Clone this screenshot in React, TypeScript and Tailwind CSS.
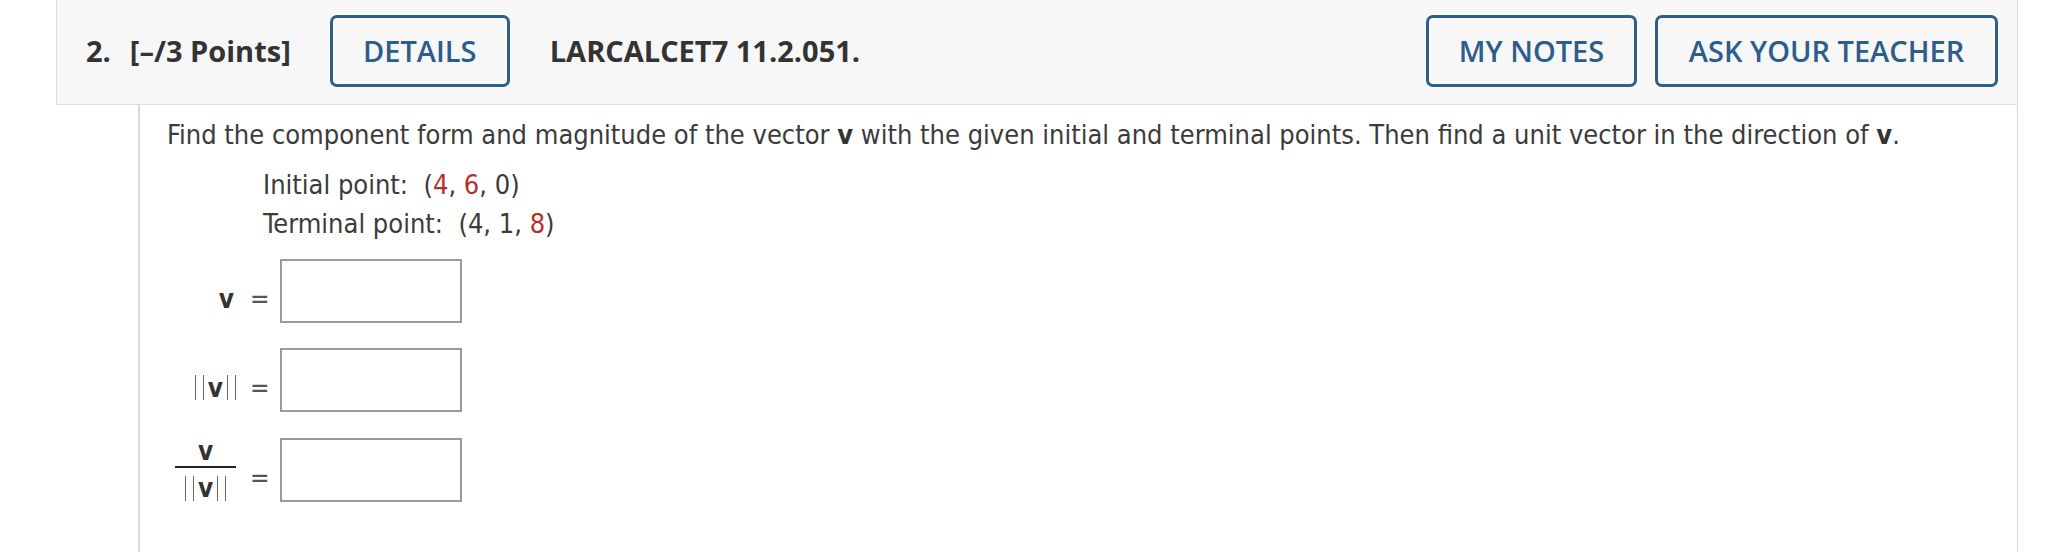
import React from "react";

const bodyFont = { fontFamily: '"DejaVu Sans Condensed", "DejaVu Sans", sans-serif' };

function Bars({ children }: { children: React.ReactNode }) {
  return (
    <span className="inline-flex items-center">
      <span className="inline-block h-[25px] w-[9px] border-x-[1.5px] border-[#666]" />
      <span className="mx-[4px] font-bold text-[#333]">{children}</span>
      <span className="inline-block h-[25px] w-[9px] border-x-[1.5px] border-[#666]" />
    </span>
  );
}

function Box() {
  return <div className="ml-[15px] h-[64px] w-[182px] border-2 border-[#9a9a9a] bg-white" />;
}

function Eq() {
  return <span className="ml-[14px] mt-[16px] w-[15px] text-center text-[26px] leading-[26px] text-[#555]">=</span>;
}

export default function App() {
  return (
    <div className="h-[552px] w-[2048px] overflow-hidden bg-white" style={{ fontFamily: '"Open Sans", sans-serif' }}>
      <div className="ml-[56px] w-[1962px]">
        <div className="flex h-[105px] items-start border-x border-b border-[#dedede] bg-[#f7f7f7] pl-[29px] pr-[19px] pt-[15px]">
          <div className="flex h-[72px] items-center text-[29px] font-bold text-[#333]">
            <span>2.</span>
            <span className="ml-[19px]">[–/3 Points]</span>
          </div>
          <button className="ml-[39px] h-[72px] w-[180px] rounded-[7px] border-[3px] border-[#2f5e88] bg-[#f7f7f7] text-[29px] font-semibold text-[#2d5d8a]">
            DETAILS
          </button>
          <div className="ml-[40px] flex h-[72px] items-center text-[29px] font-bold text-[#333]">LARCALCET7 11.2.051.</div>
          <button className="ml-auto h-[72px] w-[211px] rounded-[7px] border-[3px] border-[#2f5e88] bg-[#f7f7f7] text-[29px] font-semibold text-[#2d5d8a]">
            MY NOTES
          </button>
          <button className="ml-[18px] h-[72px] w-[343px] rounded-[7px] border-[3px] border-[#2f5e88] bg-[#f7f7f7] text-[29px] font-semibold text-[#2d5d8a]">
            ASK YOUR TEACHER
          </button>
        </div>
        <div className="ml-[82px] h-[447px] border-l-2 border-r border-[#dadada] bg-white text-[27px] text-[#3b3b3b]" style={bodyFont}>
          <p className="pl-[27px] pt-[13px] leading-[34px]">
            Find the component form and magnitude of the vector <b className="text-[#333]">v</b> with the given initial and terminal points. Then find a unit vector in the direction of <b className="text-[#333]">v</b>.
          </p>
          <div className="mt-[13px] pl-[123px] leading-[39px]">
            <div>
              Initial point:&nbsp; (<span className="text-[#b1322a]">4</span>, <span className="text-[#b1322a]">6</span>, 0)
            </div>
            <div>
              Terminal point:&nbsp; (4, 1, <span className="text-[#b1322a]">8</span>)
            </div>
          </div>
          <div className="mt-[16px] flex flex-col gap-[24.5px]">
            <div className="flex items-center">
              <div className="mt-[16px] flex w-[96px] justify-end text-[26px] leading-[26px]">
                <b className="mr-[2px] text-[#333]">v</b>
              </div>
              <Eq />
              <Box />
            </div>
            <div className="flex items-center">
              <div className="mt-[16px] flex w-[96px] justify-end text-[26px] leading-[26px]">
                <Bars>v</Bars>
              </div>
              <Eq />
              <Box />
            </div>
            <div className="flex items-center">
              <div className="mt-[2px] flex w-[96px] justify-end text-[26px] leading-[26px]">
                <div className="flex w-[61px] flex-col items-center">
                  <b className="text-[#333]">v</b>
                  <div className="mt-[2px] h-[2px] w-full bg-[#222]" />
                  <div className="mt-[7px]">
                    <Bars>v</Bars>
                  </div>
                </div>
              </div>
              <Eq />
              <Box />
            </div>
          </div>
        </div>
      </div>
    </div>
  );
}
